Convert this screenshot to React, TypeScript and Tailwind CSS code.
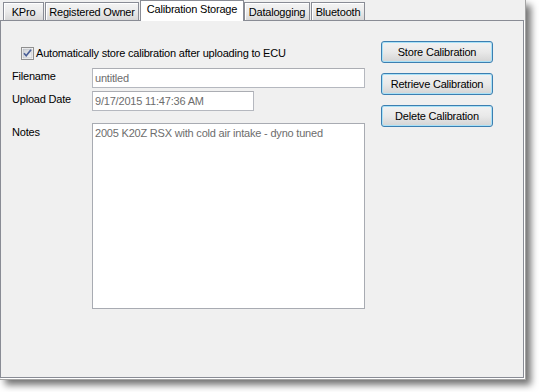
import React from "react";

const tabs = [
  { label: "KPro", cls: "ml-[3px] w-[41px]", active: false },
  { label: "Registered Owner", cls: "ml-[1px] w-[94px]", active: false },
  { label: "Calibration Storage", cls: "ml-[1px] w-[104px]", active: true },
  { label: "Datalogging", cls: "ml-0 w-[66px]", active: false },
  { label: "Bluetooth", cls: "ml-[1px] w-[54px]", active: false },
];

const Tab = ({ label, cls, active }: { label: string; cls: string; active: boolean }) =>
  active ? (
    <div
      className={`${cls} h-[21px] -mb-px border border-b-0 border-[#898c95] bg-white flex justify-center pt-[2px] leading-[13px]`}
    >
      {label}
    </div>
  ) : (
    <div
      className={`${cls} h-[18px] border border-b-0 border-[#898c95] bg-linear-to-b from-[#f4f4f4] via-[#ebebeb] to-[#d8d8d8] shadow-[inset_1px_1px_0_#fff] flex justify-center pt-[3px] leading-[13px]`}
    >
      {label}
    </div>
  );

const CheckBox = () => (
  <svg width="13" height="13" viewBox="0 0 13 13">
    <defs>
      <linearGradient id="cb" x1="0" y1="0" x2="1" y2="1">
        <stop offset="0" stopColor="#cbcfd5" />
        <stop offset="1" stopColor="#f6f6f6" />
      </linearGradient>
    </defs>
    <rect x="0.5" y="0.5" width="12" height="12" fill="#fff" stroke="#8f8f8f" />
    <rect x="2" y="2" width="9" height="9" fill="url(#cb)" stroke="#aeb3b9" strokeWidth="0.6" />
    <path d="M3 6.3 L5.2 8.8 L10 2.8" fill="none" stroke="#4a5f97" strokeWidth="1.7" />
  </svg>
);

const WinButton = ({ children }: { children: React.ReactNode }) => (
  <button className="w-[112px] h-[22px] rounded-[3px] border border-[#3c7fb1] shadow-[inset_0_0_0_1px_#a9e1f7] bg-linear-to-b from-[#f2f2f2] via-[#e9e9e9] to-[#d4d4d4] text-black text-[11px] leading-[13px] tracking-[-0.2px] flex items-center justify-center">
    {children}
  </button>
);

export default function App() {
  return (
    <div className="w-[539px] h-[392px] bg-white font-['Liberation_Sans',Arial,sans-serif] text-[11px] text-black tracking-[-0.2px]">
      <div className="w-[526px] h-[380px] bg-[#f0f0f0] border-r border-b border-[#a4a4a4] shadow-[5px_5px_7px_rgba(0,0,0,0.55)] flex flex-col">
        {/* tab headers */}
        <div className="relative z-10 h-[20px] flex items-end">
          {tabs.map((t) => (
            <Tab key={t.label} {...t} />
          ))}
        </div>

        {/* tab page */}
        <div className="w-[524px] h-[358px] border border-[#898c95] shadow-[1px_1px_0_#fff] flex">
          <div className="w-[364px] pl-[11px] pt-[26px] flex flex-col">
            <div className="h-[13px] flex items-center leading-[13px]">
              <div className="ml-[9px] w-[13px] h-[13px]">
                <CheckBox />
              </div>
              <span className="ml-[2px]">Automatically store calibration after uploading to ECU</span>
            </div>

            <div className="mt-[8px] flex">
              <div className="w-[80px] pt-[2px] leading-[13px]">Filename</div>
              <div className="w-[273px] h-[20px] bg-white border border-[#b5b8bf] border-t-[#abadb3] flex items-center pl-[2px] text-[#6d6d6d] leading-[13px]">
                untitled
              </div>
            </div>

            <div className="mt-[3px] flex">
              <div className="w-[80px] pt-[2px] leading-[13px]">Upload Date</div>
              <div className="w-[162px] h-[20px] bg-white border border-[#b5b8bf] border-t-[#abadb3] flex items-center pl-[2px] text-[#6d6d6d] leading-[13px]">
                9/17/2015 11:47:36 AM
              </div>
            </div>

            <div className="mt-[12px] flex">
              <div className="w-[80px] pt-[3px] leading-[13px]">Notes</div>
              <div className="w-[273px] h-[186px] bg-white border border-[#a8abb2] pl-[2px] pt-[3px] text-[#6d6d6d] leading-[13px]">
                2005 K20Z RSX with cold air intake - dyno tuned
              </div>
            </div>
          </div>

          <div className="ml-[16px] pt-[20px] flex flex-col gap-[10px]">
            <WinButton>Store Calibration</WinButton>
            <WinButton>Retrieve Calibration</WinButton>
            <WinButton>Delete Calibration</WinButton>
          </div>
        </div>
      </div>
    </div>
  );
}
